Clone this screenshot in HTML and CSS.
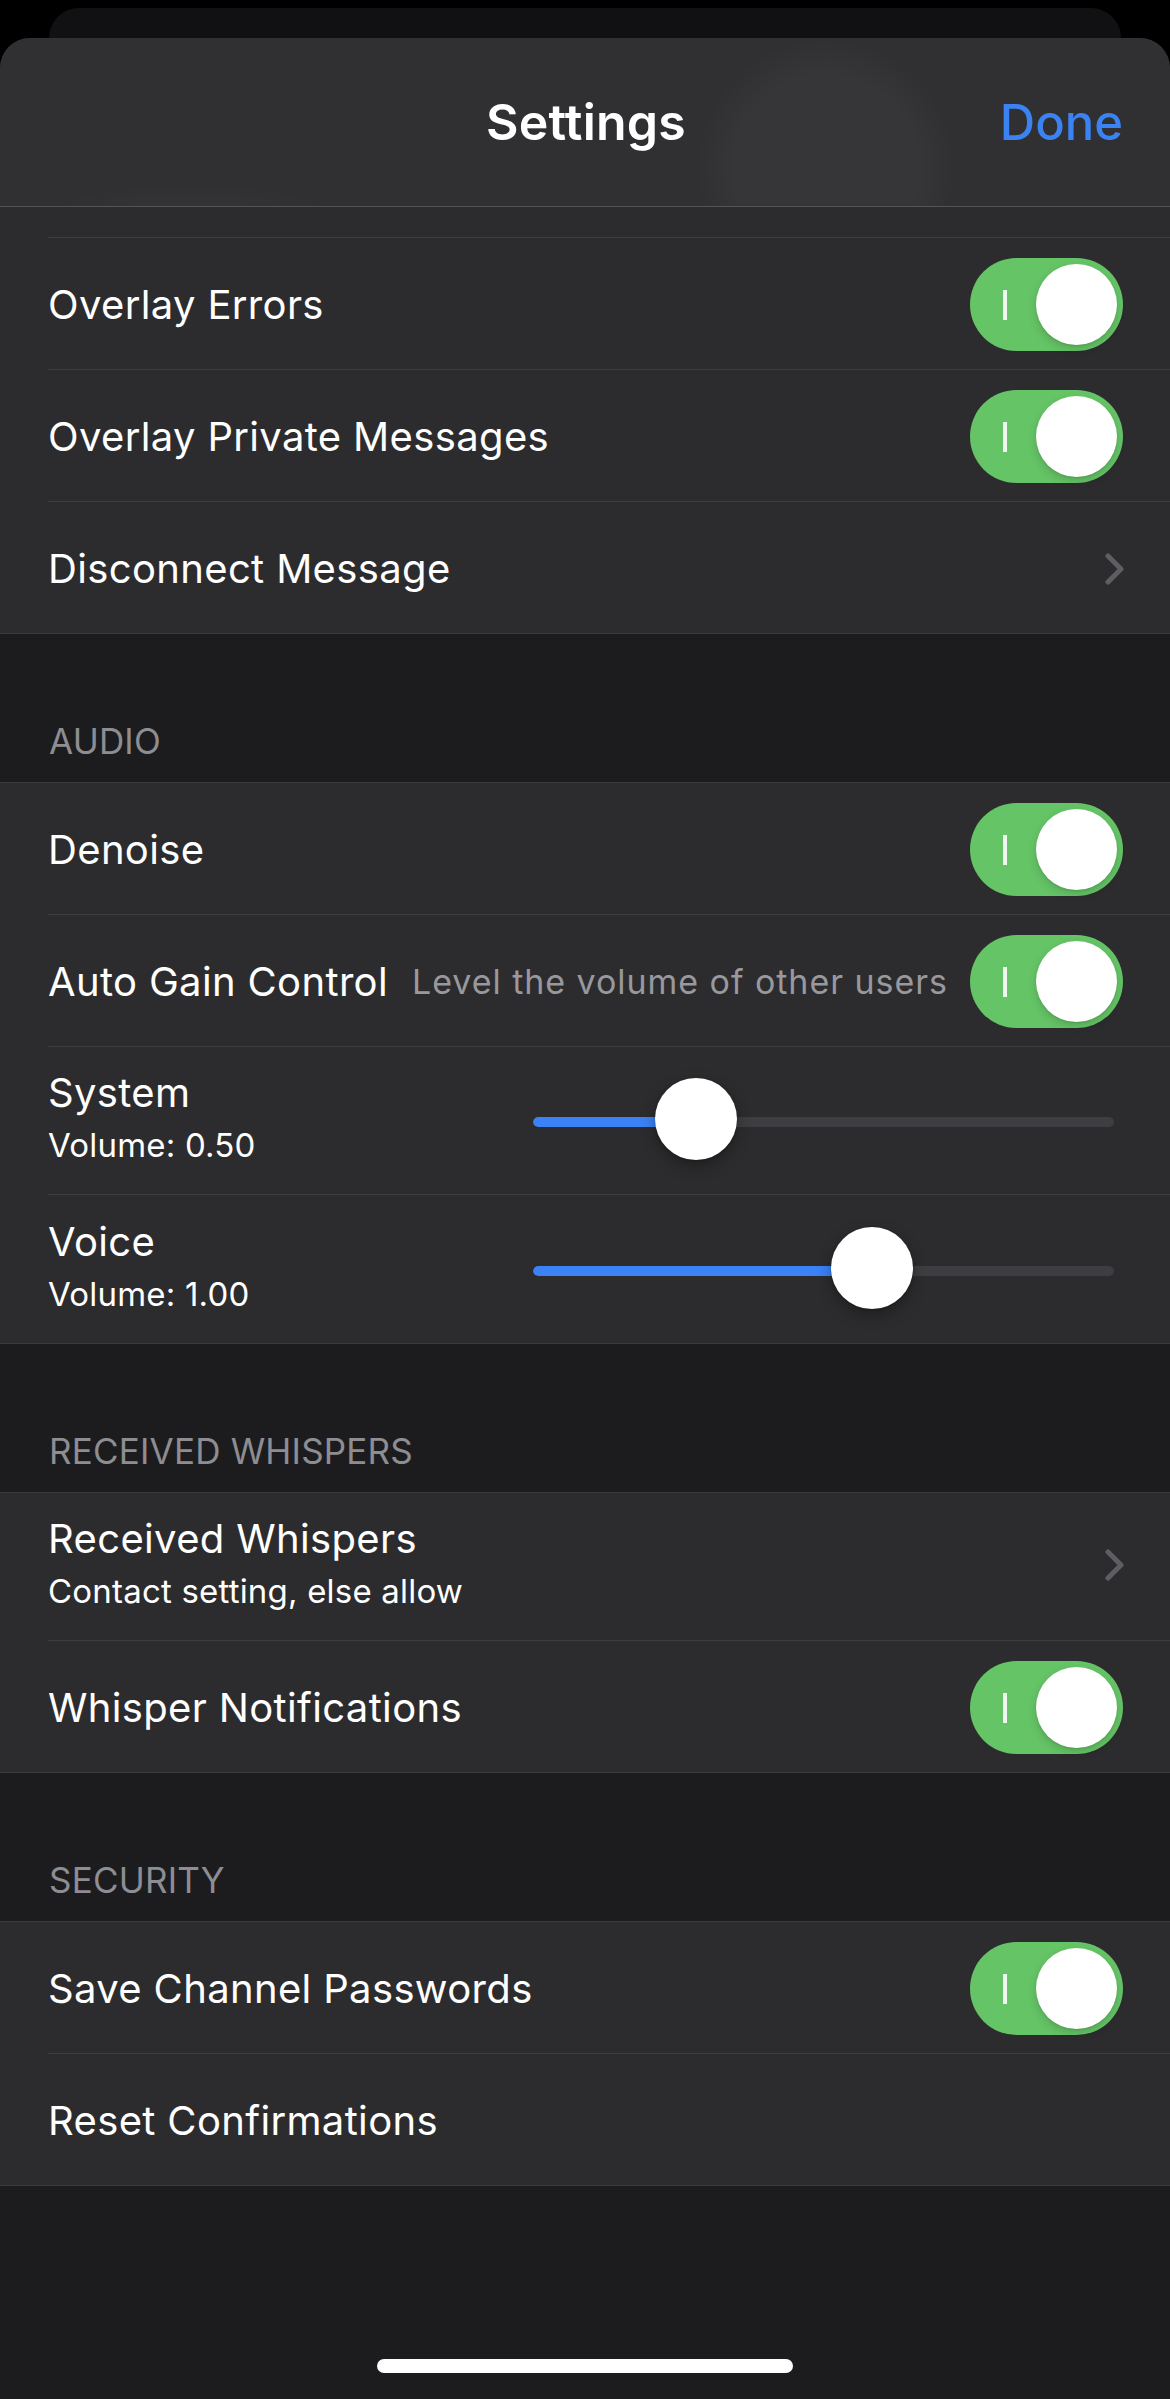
FILE: index.html
```html
<!DOCTYPE html>
<html lang="en">
<head>
<meta charset="utf-8">
<title>Settings</title>
<link rel="stylesheet" href="styles.css">
</head>
<body>
<div class="screen">
  <div class="back-card"></div>
  <div class="sheet">
    <header class="nav">
      <span></span>
      <div class="nav-title">Settings</div>
      <div class="nav-done">Done</div>
    </header>

    <section class="group first">
      <div class="row"><div class="row-inner partial"></div></div>
      <div class="row"><div class="row-inner">
        <span class="label">Overlay Errors</span>
        <span class="toggle"><span class="toggle-mark"></span><span class="toggle-knob"></span></span>
      </div></div>
      <div class="row"><div class="row-inner">
        <span class="label">Overlay Private Messages</span>
        <span class="toggle"><span class="toggle-mark"></span><span class="toggle-knob"></span></span>
      </div></div>
      <div class="row"><div class="row-inner last">
        <span class="label">Disconnect Message</span>
        <svg class="chevron" width="20" height="32" viewBox="0 0 20 32"><path d="M3 3 L16 16 L3 29" fill="none" stroke="#5e5e62" stroke-width="5" stroke-linecap="round" stroke-linejoin="round"/></svg>
      </div></div>
    </section>

    <div class="group-header"><span>AUDIO</span></div>
    <section class="group">
      <div class="row"><div class="row-inner">
        <span class="label">Denoise</span>
        <span class="toggle"><span class="toggle-mark"></span><span class="toggle-knob"></span></span>
      </div></div>
      <div class="row"><div class="row-inner">
        <span class="label">Auto Gain Control</span>
        <span class="inline-sub">Level the volume of other users</span>
        <span class="toggle"><span class="toggle-mark"></span><span class="toggle-knob"></span></span>
      </div></div>
      <div class="row"><div class="row-inner tall">
        <div class="stack">
          <span class="label">System</span>
          <span class="sub">Volume: 0.50</span>
        </div>
        <div class="slider">
          <div class="track"><div class="fill" style="width:163px"></div></div>
          <div class="thumb" style="left:122px"></div>
        </div>
      </div></div>
      <div class="row"><div class="row-inner tall last">
        <div class="stack">
          <span class="label">Voice</span>
          <span class="sub">Volume: 1.00</span>
        </div>
        <div class="slider">
          <div class="track"><div class="fill" style="width:339px"></div></div>
          <div class="thumb" style="left:298px"></div>
        </div>
      </div></div>
    </section>

    <div class="group-header"><span>RECEIVED WHISPERS</span></div>
    <section class="group">
      <div class="row"><div class="row-inner tall">
        <div class="stack">
          <span class="label">Received Whispers</span>
          <span class="sub">Contact setting, else allow</span>
        </div>
        <svg class="chevron" width="20" height="32" viewBox="0 0 20 32"><path d="M3 3 L16 16 L3 29" fill="none" stroke="#5e5e62" stroke-width="5" stroke-linecap="round" stroke-linejoin="round"/></svg>
      </div></div>
      <div class="row"><div class="row-inner last">
        <span class="label">Whisper Notifications</span>
        <span class="toggle"><span class="toggle-mark"></span><span class="toggle-knob"></span></span>
      </div></div>
    </section>

    <div class="group-header"><span>SECURITY</span></div>
    <section class="group">
      <div class="row"><div class="row-inner">
        <span class="label">Save Channel Passwords</span>
        <span class="toggle"><span class="toggle-mark"></span><span class="toggle-knob"></span></span>
      </div></div>
      <div class="row"><div class="row-inner last">
        <span class="label">Reset Confirmations</span>
      </div></div>
    </section>

    <div class="home-indicator"></div>
  </div>
</div>
</body>
</html>
```

FILE: styles.css
```css
* { box-sizing: border-box; }

html, body {
  margin: 0;
  padding: 0;
  background: #000;
}

body {
  font-family: Inter, "Noto Sans", "Liberation Sans", sans-serif;
  color: #fff;
  -webkit-font-smoothing: antialiased;
}

.screen {
  width: 1170px;
  height: 2399px;
  overflow: hidden;
  background: #000;
}

.back-card {
  height: 30px;
  margin: 8px 49px 0;
  background: #111113;
  border-radius: 30px 30px 0 0;
}

.sheet {
  height: 2361px;
  background: #1c1c1e;
  border-radius: 30px 30px 0 0;
  overflow: hidden;
  display: flex;
  flex-direction: column;
}

.nav {
  height: 169px;
  flex: none;
  display: grid;
  grid-template-columns: 1fr auto 1fr;
  align-items: center;
  padding: 0 47px 0 49px;
  border-bottom: 1px solid #545457;
  background:
    radial-gradient(circle at 826px 130px, rgba(255,255,255,0.03) 0, rgba(255,255,255,0.03) 90px, rgba(255,255,255,0) 130px),
    radial-gradient(ellipse at 190px 170px, rgba(255,255,255,0.025) 0, rgba(255,255,255,0) 140px),
    #303032;
}

.nav-title {
  font-size: 50px;
  font-weight: 600;
  letter-spacing: 0.2px;
  color: #fff;
}

.nav-done {
  justify-self: end;
  font-size: 49px;
  font-weight: 500;
  color: #3b82f2;
}

.group {
  flex: none;
  background: #2c2c2e;
  border-top: 1px solid #3a3a3d;
  border-bottom: 1px solid #3a3a3d;
}

.group.first {
  border-top: 0;
}

.row {
  padding-left: 48px;
}

.row-inner {
  height: 132px;
  display: flex;
  align-items: center;
  padding-right: 47px;
  padding-top: 2px;
  border-bottom: 1px solid #3d3d40;
}

.row-inner.partial {
  height: 31px;
}

.row-inner.tall {
  height: 148px;
  padding-top: 0;
  padding-bottom: 3px;
}

.row-inner.last {
  border-bottom: 0;
  height: 131px;
}

.row-inner.tall.last {
  height: 148px;
}

.label {
  font-size: 40px;
  line-height: 52px;
  color: #fff;
  letter-spacing: 0.35px;
  white-space: nowrap;
}

.inline-sub {
  margin-left: 24px;
  font-size: 34px;
  color: #98989d;
  letter-spacing: 0.95px;
  white-space: nowrap;
}

.stack {
  display: flex;
  flex-direction: column;
}

.sub {
  font-size: 33px;
  line-height: 52px;
  color: #fff;
  letter-spacing: 0.2px;
  white-space: nowrap;
}

.toggle {
  margin-left: auto;
  position: relative;
  flex: none;
  width: 153px;
  height: 93px;
  border-radius: 47px;
  background: #65c466;
}

.toggle-mark {
  position: absolute;
  left: 33px;
  top: 32px;
  width: 4px;
  height: 30px;
  background: rgba(255,255,255,0.9);
}

.toggle-knob {
  position: absolute;
  left: 66px;
  top: 6px;
  width: 81px;
  height: 81px;
  border-radius: 50%;
  background: #fff;
  box-shadow: 0 4px 10px rgba(0,0,0,0.15), 0 1px 2px rgba(0,0,0,0.1);
}

.chevron {
  margin-left: auto;
  margin-right: -2px;
  flex: none;
  display: block;
}

.slider {
  margin-left: auto;
  margin-right: 9px;
  position: relative;
  width: 581px;
  height: 82px;
  display: flex;
  align-items: center;
  flex: none;
}

.track {
  width: 100%;
  height: 10px;
  margin-top: 6px;
  border-radius: 5px;
  background: #3e3e42;
  overflow: hidden;
}

.fill {
  height: 100%;
  background: #3a82f6;
  border-radius: 5px;
}

.thumb {
  position: absolute;
  top: 0;
  width: 82px;
  height: 82px;
  border-radius: 50%;
  background: #fff;
  box-shadow: 0 6px 16px rgba(0,0,0,0.3), 0 1px 3px rgba(0,0,0,0.2);
}

.group-header {
  flex: none;
  height: 148px;
  display: flex;
  align-items: flex-end;
  padding: 0 49px 21px;
}

.group-header span {
  font-size: 35px;
  line-height: 39px;
  color: #8d8d92;
  letter-spacing: 0.2px;
}

.home-indicator {
  margin: auto auto 26px;
  width: 416px;
  height: 14px;
  border-radius: 7px;
  background: #fff;
  flex: none;
}
```
